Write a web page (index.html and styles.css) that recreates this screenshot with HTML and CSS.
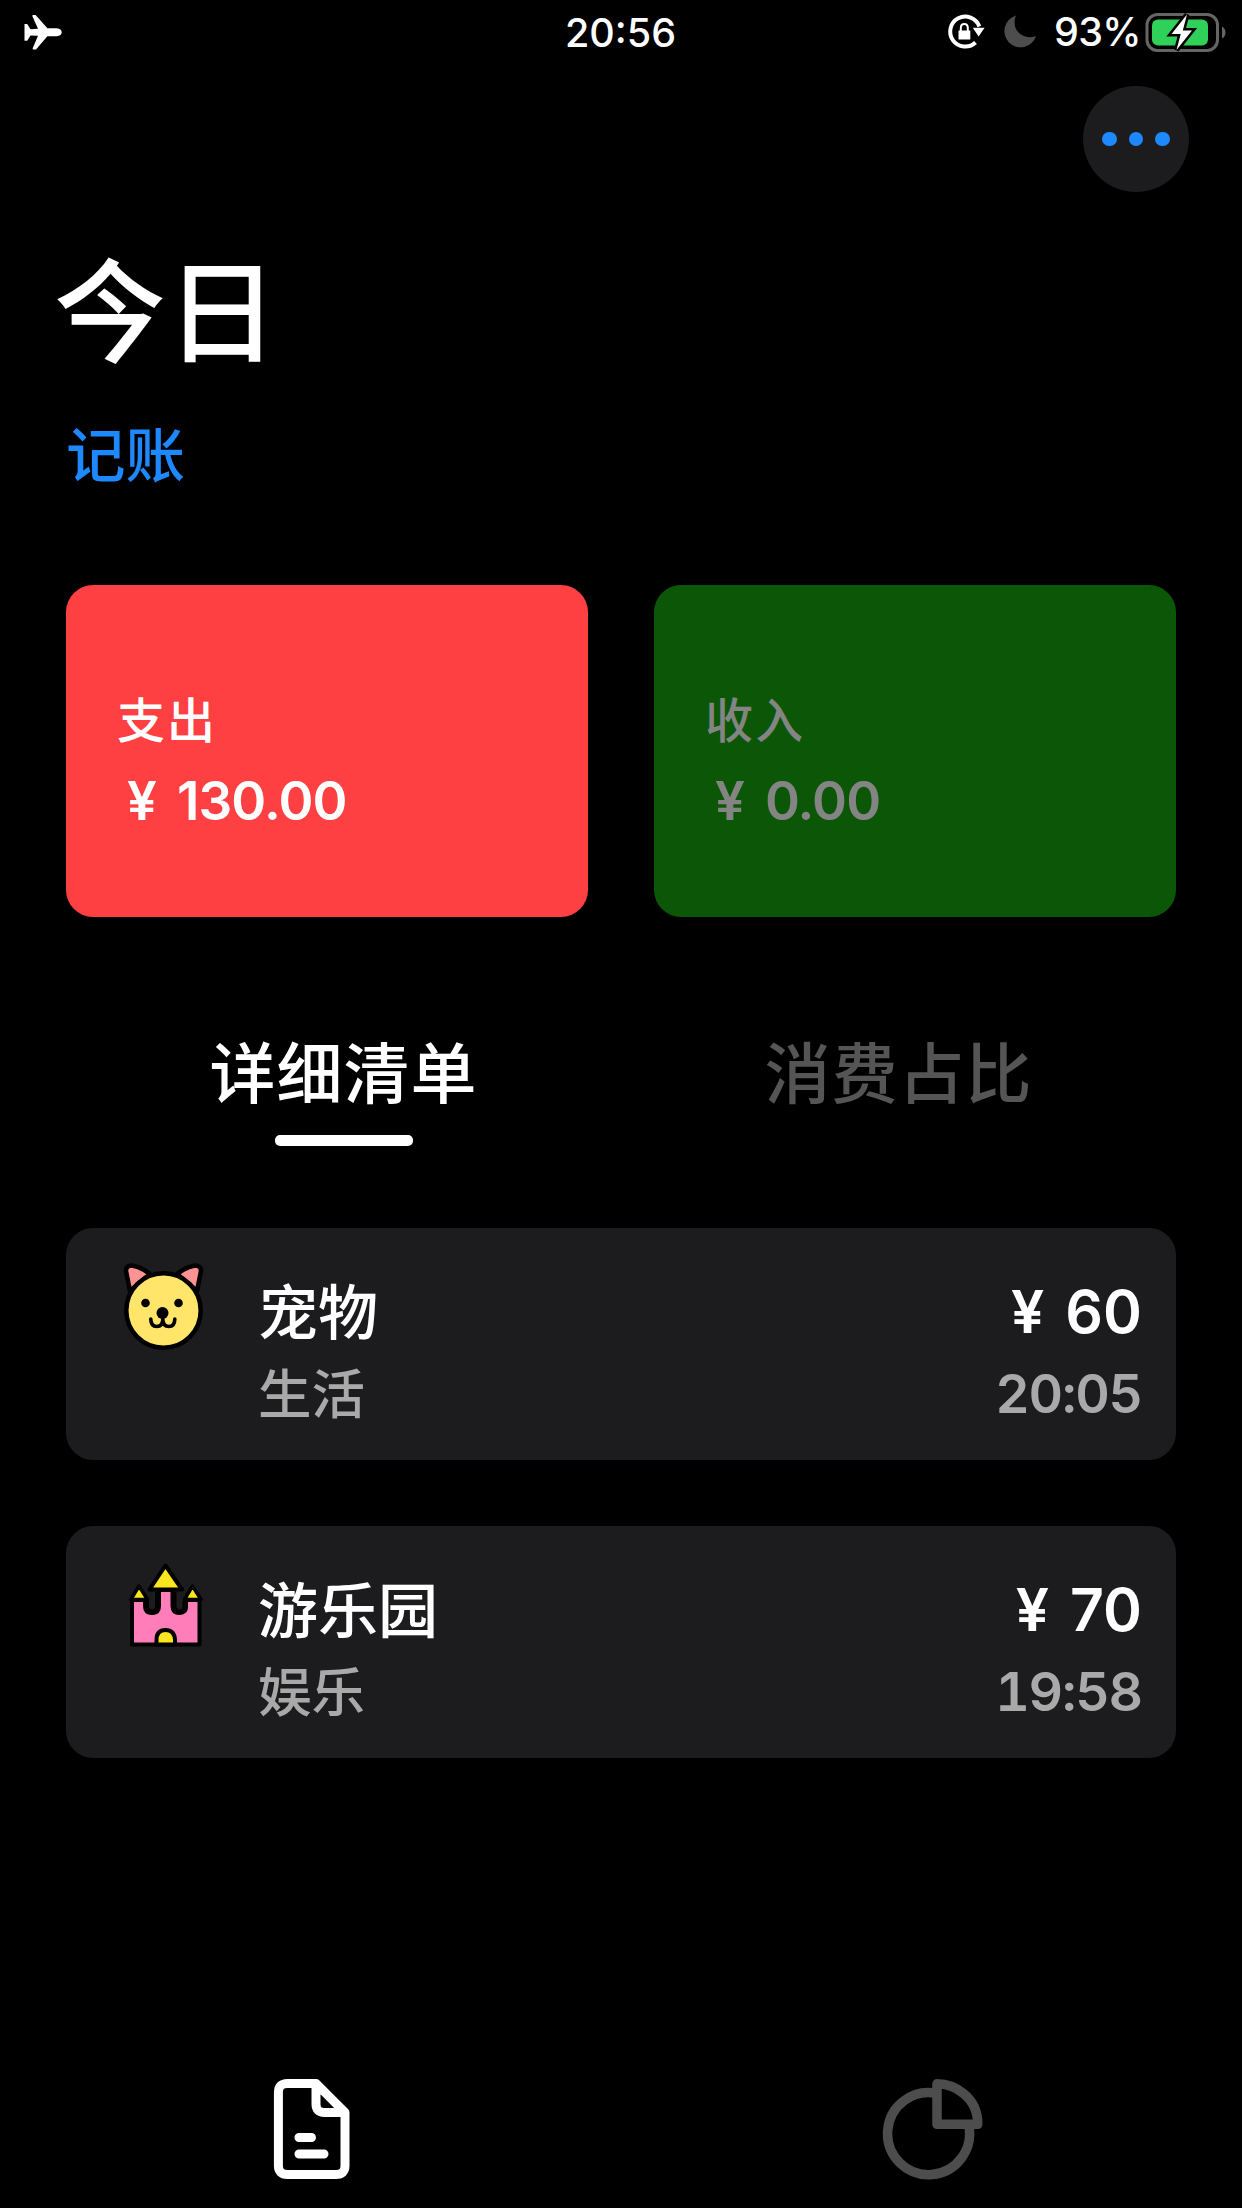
FILE: index.html
```html
<!DOCTYPE html>
<html lang="zh-CN">
<head>
    <meta charset="UTF-8">
    <meta name="viewport" content="width=device-width, initial-scale=1.0">
    <title>今日</title>
    <link rel="stylesheet" href="styles.css">
</head>
<body>
    <!-- Status bar -->
    <div class="status-bar">
        <div class="status-left">
            <svg width="40" height="38" viewBox="23 12 40 38">
                <path fill="#fff" d="M24.5 23h2.7l3.3 5.2 7.5-.4-5.6-12.6q-.3-1.2.8-1.2h2.4l11.8 13.2h9.3q5 .6 5 4.1t-5 3.9h-9.3L36 48.4h-2.6q-1 0-.7-1.2l5.3-12.4-7.5-.4-3.3 5.4h-2.7z"/>
            </svg>
        </div>
        <div class="status-time">20:56</div>
        <div class="status-right">
            <svg width="102" height="44" viewBox="945 10 102 44">
                <path fill="none" stroke="#fff" stroke-width="4" d="M980.3 26.5A15 15 0 1 0 976.5 42.5"/>
                <path fill="#fff" d="M973.8 27.8h11.8l-6 8.8zM959.500 30.500h11.800V39.500H959.500z"/>
                <path fill="none" stroke="#fff" stroke-width="2" d="M961.8 32v-4q0-4 3.5-4t3.5 4v4"/>
                <path fill="#4d4d4d" d="M1017 15.6a16.2 16.2 0 1 0 20 20.6c-14 4.500-25.500-7-20-20.600z"/>
            </svg>
            <div class="battery-level">93%</div>
            <svg width="84" height="44" viewBox="1144 10 84 44">
                <rect x="1147" y="14.500" width="70.500" height="36" rx="10.500" fill="none" stroke="#656565" stroke-width="3"/>
                <path fill="#656565" d="M1222 26.500q3.500 2 3.500 6t-3.500 6z"/>
                <rect x="1152" y="19.500" width="56" height="26" rx="6" fill="#30d158"/>
                <path fill="#fff" stroke="#000" stroke-width="5" paint-order="stroke" d="M1187 14.500l-15.500 19.500h9.200l-4.200 16 15.500-19.500h-9.200z"/>
            </svg>
        </div>
    </div>

    <div class="top-nav">
        <button class="menu-button">
            <span class="dot"></span>
            <span class="dot"></span>
            <span class="dot"></span>
        </button>
    </div>

    <div class="container">
        <h1>今日</h1>
        <a class="add-record">记账</a>

        <!-- Totals -->
        <div class="totals">
            <div class="total-card expense">
                <div class="total-label">支出</div>
                <div class="total-amount">¥<span class="number">130.00</span></div>
            </div>
            <div class="total-card income">
                <div class="total-label">收入</div>
                <div class="total-amount">¥<span class="number">0.00</span></div>
            </div>
        </div>

        <div class="tabs">
            <div class="tab active">详细清单</div>
            <div class="tab">消费占比</div>
        </div>

        <!-- Records -->
        <div class="records">
            <div class="record">
                <svg class="record-icon" width="84" height="92" viewBox="120 1260 84 92">
                    <g stroke="#000" stroke-width="4.500" stroke-linejoin="round">
                        <path fill="#ff9292" d="M130 1291L126 1271Q126 1265.500 132 1265.500Q141 1267 150 1274zM197 1291L201 1271Q201 1265.500 195 1265.500Q186 1267 177 1274z"/>
                        <circle cx="163.500" cy="1310.500" r="37.200" fill="#ffe66b"/>
                    </g>
                    <circle cx="145.500" cy="1303" r="4.300"/>
                    <circle cx="178.500" cy="1303" r="4.300"/>
                    <circle cx="162.500" cy="1313" r="6"/>
                    <path fill="none" stroke="#000" stroke-width="3.600" stroke-linecap="round" d="M150.800 1319q0 7.500 6 7.500t6-7.500q0 7.500 6 7.500t6-7.500M162.800 1313v7"/>
                </svg>
                <div class="record-name">
                    <div class="title">宠物</div>
                    <div class="category">生活</div>
                </div>
                <div class="record-value">
                    <div class="amount">¥<span class="number">60</span></div>
                    <div class="time">20:05</div>
                </div>
            </div>
            <div class="record">
                <svg class="record-icon" width="84" height="92" viewBox="120 1558 84 92">
                    <g stroke="#000" stroke-width="4" stroke-linejoin="round">
                        <path fill="#ff7eb9" d="M132 1600H145V1606Q145 1613 152 1613T159 1606V1590H172.500V1606Q172.500 1613 179.500 1613T186 1606V1600H199.500V1644.500H132z"/>
                        <path fill="#f9e61e" d="M156.500 1644.500V1640Q156.500 1630 165.500 1630T175 1640V1644.500zM165.500 1565.500L149.500 1589.500H182z"/>
                        <path fill="#f9e61e" stroke-width="3.500" d="M139 1586L130.800 1599.500H147.500zM192.500 1586L184.500 1599.500H201z"/>
                    </g>
                    <path fill="none" stroke="#000" stroke-width="5" d="M146.500 1601v5q0 6 5.500 6t5.500-6v-14M174 1592v14q0 6 5.500 6t5.500-6v-5"/>
                </svg>
                <div class="record-name">
                    <div class="title">游乐园</div>
                    <div class="category">娱乐</div>
                </div>
                <div class="record-value">
                    <div class="amount">¥<span class="number">70</span></div>
                    <div class="time">19:58</div>
                </div>
            </div>
        </div>
    </div>

    <!-- Bottom navigation -->
    <div class="bottom-nav">
        <div class="nav-item active">
            <svg width="78" height="102" viewBox="0 0 78 102" fill="none" stroke="currentColor" stroke-width="9" stroke-linecap="round" stroke-linejoin="round">
                <path d="M43 5.400H14.500Q5.400 5.400 5.400 14.500V87.500Q5.400 96.500 14.500 96.500H63Q72 96.500 72 87.500V34.500zM43 5.400V26Q43 34.500 51.500 34.500H72"/>
                <path d="M26 59.500H38.500M26 76H51"/>
            </svg>
        </div>
        <div class="nav-item">
            <svg width="102" height="102" viewBox="0 0 102 102" fill="none" stroke="currentColor" stroke-width="9.500" stroke-linejoin="round">
                <path d="M55.500 15.600A41 41 0 1 0 86.400 46"/>
                <path d="M55 5.800V46.300H95.800Q95.800 27 81.500 15.500Q70 6 55 5.800z"/>
            </svg>
        </div>
    </div>
</body>
</html>
```

FILE: styles.css
```css
* {
    box-sizing: border-box;
}
body {
    margin: 0;
    height: 2208px;
    display: flex;
    flex-direction: column;
    background: #000;
    color: #fff;
    font-family: Inter, "Noto Sans CJK SC", sans-serif;
    font-weight: 500;
}
svg {
    display: block;
}

/* Status bar */
.status-bar {
    display: grid;
    grid-template-columns: 1fr auto 1fr;
    align-items: center;
    height: 64px;
    padding: 0 14px 0 23px;
}
.status-time {
    margin-right: 10px;
    padding-top: 2px;
    font-size: 39.5px;
    line-height: 62px;
}
.status-right {
    display: flex;
    justify-content: flex-end;
}
.battery-level {
    width: 98px;
    padding: 1px 0 0 8px;
    font-size: 39.5px;
    letter-spacing: -0.7px;
    line-height: 43px;
    white-space: nowrap;
}

.top-nav {
    display: flex;
    justify-content: flex-end;
    padding: 22px 53px 0;
}
.menu-button {
    display: flex;
    align-items: center;
    justify-content: center;
    gap: 12px;
    width: 106px;
    height: 106px;
    padding: 0;
    border: none;
    border-radius: 50%;
    background: #1c1c1e;
}
.dot {
    width: 14.5px;
    height: 14.5px;
    border-radius: 50%;
    background: #1e88ff;
}

.container {
    flex: 1;
    padding: 0 66px;
}
h1 {
    margin: 53px 0 0 -12px;
    font-size: 112px;
    font-weight: 500;
    line-height: 136px;
}
.add-record {
    display: block;
    margin-top: 34px;
    color: #1e88ff;
    font-size: 59.5px;
    line-height: 80px;
}

/* Expense and income */
.totals {
    display: grid;
    grid-template-columns: 1fr 1fr;
    gap: 66px;
    margin-top: 90px;
}
.total-card {
    height: 332px;
    padding: 96px 51px 0;
    border-radius: 27px;
}
.total-label {
    font-size: 48px;
    letter-spacing: 2px;
    line-height: 79px;
}
.total-amount {
    padding-left: 10px;
    font-size: 53px;
    font-weight: 600;
    letter-spacing: -0.9px;
    line-height: 82px;
}
.expense {
    background: #ff4043;
}
.income {
    background: #0b5707;
    color: #848484;
}
.number {
    margin-left: 21px;
}

.tabs {
    display: grid;
    grid-template-columns: 1fr 1fr;
    margin-top: 116px;
}
.tab {
    display: flex;
    flex-direction: column;
    align-items: center;
    color: #555;
    font-size: 66px;
    letter-spacing: 1px;
    line-height: 82px;
}
.tab.active {
    color: #fff;
}
.tab.active::after {
    content: "";
    width: 138px;
    height: 11px;
    margin-top: 20px;
    border-radius: 5px;
    background: #fff;
}

/* Record list */
.records {
    display: flex;
    flex-direction: column;
    gap: 66px;
    margin-top: 82px;
}
.record {
    display: flex;
    height: 232px;
    padding: 32px 34px 0 54px;
    border-radius: 27px;
    background: #1c1c1e;
}
.record-name {
    flex: 1;
    padding: 12px 0 0 54px;
}
.record-value {
    padding-top: 11px;
    text-align: right;
}
.title, .amount {
    font-size: 60px;
    line-height: 82px;
}
.amount {
    font-size: 59px;
    font-weight: 600;
}
.category, .time {
    color: #a9a9a9;
    font-size: 53.5px;
    line-height: 82px;
}
.time {
    font-weight: 600;
    font-variant-numeric: tabular-nums;
    letter-spacing: -1.2px;
}

.bottom-nav {
    display: grid;
    grid-template-columns: 1fr 1fr;
    height: 130px;
}
.nav-item {
    display: flex;
    justify-content: center;
    padding-left: 2px;
    color: #4d4d4d;
}
.nav-item.active {
    color: #fff;
}
```
